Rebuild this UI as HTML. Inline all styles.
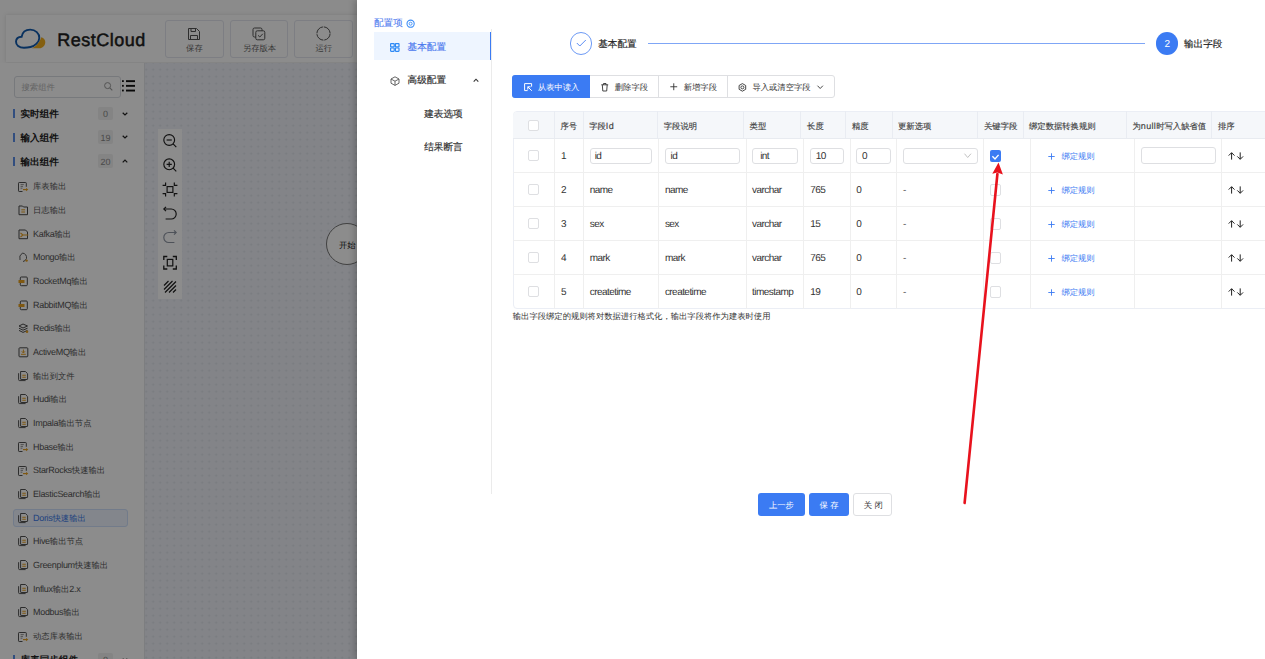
<!DOCTYPE html>
<html><head><meta charset="utf-8"><style>
html,body{margin:0;padding:0;width:1265px;height:659px;overflow:hidden;background:#fff}
body{position:relative;font-family:"Liberation Sans",sans-serif;text-rendering:geometricPrecision}
.a{position:absolute;line-height:1;white-space:nowrap;box-sizing:border-box}
svg.a{overflow:visible}
</style></head><body>

<div class="a" style="left:0.00px;top:0.00px;width:1265.00px;height:659.00px;background:#fdfdfd"></div>
<div class="a" style="left:6.30px;top:14.80px;width:1258.70px;height:47.70px;background:#fff;box-shadow:0 0 4px rgba(0,0,0,0.13)"></div>
<svg class="a" style="left:0;top:0" width="60" height="60"><path d="M31.3 48.3 C35 47.5 39.5 43 41.3 37.2 C44 38 45.4 40 45.3 42.3 C45.1 45.8 42.5 48.3 39.5 48.3 Z" fill="#f0ad1e"/><path d="M24 47.8 C19 47.8 15.9 45 16 41.5 C16.2 38.5 18.5 36.9 21.6 36.8 C22.5 31.6 26 29.6 30.2 29.6 C35.5 29.6 39.5 33.5 39.3 38 C39.2 42 35 46 30.5 47 C28 47.6 26 47.8 24 47.8 Z" fill="none" stroke="#1059ad" stroke-width="1.9"/></svg>
<div class="a" style="left:57.3px;top:30.9px;font-family:Liberation Sans;font-size:18px;letter-spacing:0.5px;color:#1e1e1e;-webkit-text-stroke:0.5px #1e1e1e">RestCloud</div>
<div class="a" style="left:164.70px;top:20.00px;width:59.30px;height:38.30px;background:#fff;border:1px solid #e3e6ee;border-radius:3px"></div>
<div class="a" style="left:186.10px;top:43.84px;font-size:8.32px;color:#666;font-weight:normal;"><span style="font-size:8.32px">保存</span></div>
<svg class="a" style="left:187.35px;top:26.50px;" width="14" height="14" viewBox="0 0 14 14"><path d="M1.5 1.5 H9.5 L12.5 4.5 V12.5 H1.5 Z" fill="none" stroke="#555" stroke-width="1"/><path d="M4 1.5 V4.5 H8.5 V1.5" fill="none" stroke="#555" stroke-width="1"/><path d="M3.5 12.5 V8.5 H10.5 V12.5" fill="none" stroke="#555" stroke-width="1"/></svg>
<div class="a" style="left:230.40px;top:20.00px;width:58.00px;height:38.30px;background:#fff;border:1px solid #e3e6ee;border-radius:3px"></div>
<div class="a" style="left:242.90px;top:43.84px;font-size:8.32px;color:#666;font-weight:normal;"><span style="font-size:8.32px">另存版本</span></div>
<svg class="a" style="left:252.40px;top:26.50px;" width="14" height="14" viewBox="0 0 14 14"><rect x="1" y="1" width="9" height="9" rx="1.5" fill="none" stroke="#555" stroke-width="1"/><rect x="3.8" y="3.8" width="9" height="9" rx="1.5" fill="#fff" stroke="#555" stroke-width="1"/><path d="M6 8.3 L7.8 10 L10.8 6.8" fill="none" stroke="#555" stroke-width="1"/></svg>
<div class="a" style="left:294.40px;top:20.00px;width:58.80px;height:38.30px;background:#fff;border:1px solid #e3e6ee;border-radius:3px"></div>
<div class="a" style="left:315.55px;top:43.84px;font-size:8.32px;color:#666;font-weight:normal;"><span style="font-size:8.32px">运行</span></div>
<svg class="a" style="left:316.30px;top:26.20px;" width="15" height="15" viewBox="0 0 15 15"><circle cx="7.5" cy="7.5" r="6.6" fill="none" stroke="#555" stroke-width="1" stroke-dasharray="9.5 0.9"/></svg>
<div class="a" style="left:0.00px;top:62.80px;width:144.50px;height:596.20px;background:#fff;border-right:1px solid #e4e6ea"></div>
<div class="a" style="left:13.50px;top:75.50px;width:107.00px;height:22.00px;background:#fff;border:1px solid #d9dce2;border-radius:3px"></div>
<div class="a" style="left:21.50px;top:82.94px;font-size:8.32px;color:#b5b5b5;font-weight:normal;"><span style="font-size:8.32px">搜索组件</span></div>
<svg class="a" style="left:103.50px;top:82.00px;" width="9" height="9" viewBox="0 0 9 9"><circle cx="3.6" cy="3.6" r="3" fill="none" stroke="#999" stroke-width="1"/><path d="M5.8 5.8 L8.3 8.3" stroke="#999" stroke-width="1.1"/></svg>
<svg class="a" style="left:122.00px;top:80.00px;" width="13" height="12" viewBox="0 0 13 12"><rect x="0" y="0.2" width="1.8" height="1.8" fill="#111"/><rect x="0" y="4.9" width="1.8" height="1.8" fill="#111"/><rect x="0" y="9.6" width="1.8" height="1.8" fill="#111"/><rect x="4" y="0.2" width="9" height="1.9" fill="#111"/><rect x="4" y="4.9" width="9" height="1.9" fill="#111"/><rect x="4" y="9.6" width="9" height="1.9" fill="#111"/></svg>
<div class="a" style="left:13.00px;top:109.20px;width:2.00px;height:9.00px;background:#5c8ee8"></div>
<div class="a" style="left:20.50px;top:110.36px;font-size:9.6px;color:#222;font-weight:bold;"><span style="font-size:9.6px">实时组件</span></div>
<div class="a" style="left:97.80px;top:106.70px;width:15.10px;height:13.40px;background:#f1f1f1;border-radius:2px"></div>
<div class="a" style="left:102.95px;top:110.14px;font-size:8.32px;color:#888;font-weight:normal;"><span style="font-size:9px;letter-spacing:0px">0</span></div>
<svg class="a" style="left:122.00px;top:111.70px;" width="6" height="4" viewBox="0 0 6 4"><path d="M0.7 0.8 L3 3 L5.3 0.8" fill="none" stroke="#222" stroke-width="1.2"/></svg>
<div class="a" style="left:13.00px;top:132.90px;width:2.00px;height:9.00px;background:#5c8ee8"></div>
<div class="a" style="left:20.50px;top:134.06px;font-size:9.6px;color:#222;font-weight:bold;"><span style="font-size:9.6px">输入组件</span></div>
<div class="a" style="left:97.80px;top:130.40px;width:15.10px;height:13.40px;background:#f1f1f1;border-radius:2px"></div>
<div class="a" style="left:100.55px;top:133.84px;font-size:8.32px;color:#888;font-weight:normal;"><span style="font-size:9px;letter-spacing:0px">19</span></div>
<svg class="a" style="left:122.00px;top:135.40px;" width="6" height="4" viewBox="0 0 6 4"><path d="M0.7 0.8 L3 3 L5.3 0.8" fill="none" stroke="#222" stroke-width="1.2"/></svg>
<div class="a" style="left:13.00px;top:156.70px;width:2.00px;height:9.00px;background:#5c8ee8"></div>
<div class="a" style="left:20.50px;top:157.86px;font-size:9.6px;color:#222;font-weight:bold;"><span style="font-size:9.6px">输出组件</span></div>
<div class="a" style="left:97.80px;top:154.20px;width:15.10px;height:13.40px;background:#f1f1f1;border-radius:2px"></div>
<div class="a" style="left:100.55px;top:157.64px;font-size:8.32px;color:#888;font-weight:normal;"><span style="font-size:9px;letter-spacing:0px">20</span></div>
<svg class="a" style="left:122.00px;top:158.70px;" width="6" height="4" viewBox="0 0 6 4"><path d="M0.7 3.3 L3 1 L5.3 3.3" fill="none" stroke="#222" stroke-width="1.2"/></svg>
<div class="a" style="left:33.00px;top:182.24px;font-size:8.32px;color:#555;font-weight:normal;"><span style="font-size:8.32px">库表输出</span></div>
<svg class="a" style="left:18.00px;top:181.80px;" width="11" height="11" viewBox="0 0 11 11"><path d="M8.3 4.8 V1.2 Q8.3 0.5 7.6 0.5 H1.2 Q0.5 0.5 0.5 1.2 V8.8 Q0.5 9.5 1.2 9.5 H4.5" fill="none" stroke="#4a4a4a" stroke-width="0.95"/><path d="M2.6 2.6 H5.8 M2.6 4.4 H5 M2.6 6.2 H4.4" stroke="#777" stroke-width="0.8"/><path d="M5 7.6 H9.2" stroke="#e8a020" stroke-width="1.2"/><path d="M8 5.9 L10.3 7.6 L8 9.3 Z" fill="#e8a020"/></svg>
<div class="a" style="left:33.00px;top:205.92px;font-size:8.32px;color:#555;font-weight:normal;"><span style="font-size:8.32px">日志输出</span></div>
<svg class="a" style="left:18.00px;top:205.08px;" width="11" height="11" viewBox="0 0 11 11"><path d="M1 1 H4.5 L5.5 2 H9.5 V9.7 H1 Z" fill="none" stroke="#4a4a4a" stroke-width="1"/><path d="M3.3 4.8 H7 M3.3 7 H7" stroke="#e8a020" stroke-width="1"/></svg>
<div class="a" style="left:33.00px;top:229.60px;font-size:8.32px;color:#555;font-weight:normal;"><span style="font-size:9px;letter-spacing:-0.3px">Kafka</span><span style="font-size:8.32px">输出</span></div>
<svg class="a" style="left:18.00px;top:228.76px;" width="11" height="11" viewBox="0 0 11 11"><path d="M1 1 H7.5 L9.5 3 V9.7 H1 Z" fill="none" stroke="#4a4a4a" stroke-width="1"/><path d="M2.5 4 L5 6 L2.5 8 M5 6 H10.3" fill="none" stroke="#e8a020" stroke-width="1.1"/></svg>
<div class="a" style="left:33.00px;top:253.28px;font-size:8.32px;color:#555;font-weight:normal;"><span style="font-size:9px;letter-spacing:-0.3px">Mongo</span><span style="font-size:8.32px">输出</span></div>
<svg class="a" style="left:18.00px;top:252.44px;" width="11" height="11" viewBox="0 0 11 11"><path d="M2 8 Q0.5 3.5 4.5 1 Q9 2 8.5 6.5 Q7 9.5 5 9.5" fill="none" stroke="#4a4a4a" stroke-width="0.9"/><circle cx="8.6" cy="8.6" r="1.2" fill="#e8a020"/></svg>
<div class="a" style="left:33.00px;top:276.96px;font-size:8.32px;color:#555;font-weight:normal;"><span style="font-size:9px;letter-spacing:-0.3px">RocketMq</span><span style="font-size:8.32px">输出</span></div>
<svg class="a" style="left:18.00px;top:276.12px;" width="11" height="11" viewBox="0 0 11 11"><rect x="2.3" y="1" width="7" height="8.7" rx="1" fill="none" stroke="#4a4a4a" stroke-width="1"/><rect x="0.5" y="4" width="6" height="3" fill="#e8a020"/></svg>
<div class="a" style="left:33.00px;top:300.64px;font-size:8.32px;color:#555;font-weight:normal;"><span style="font-size:9px;letter-spacing:-0.3px">RabbitMQ</span><span style="font-size:8.32px">输出</span></div>
<svg class="a" style="left:18.00px;top:299.80px;" width="11" height="11" viewBox="0 0 11 11"><rect x="2.3" y="1" width="7" height="8.7" rx="1" fill="none" stroke="#4a4a4a" stroke-width="1"/><rect x="0.5" y="4" width="6" height="3" fill="#e8a020"/></svg>
<div class="a" style="left:33.00px;top:324.32px;font-size:8.32px;color:#555;font-weight:normal;"><span style="font-size:9px;letter-spacing:-0.3px">Redis</span><span style="font-size:8.32px">输出</span></div>
<svg class="a" style="left:18.00px;top:323.48px;" width="11" height="11" viewBox="0 0 11 11"><path d="M1 3 L5 1 L9.5 3 L5 5 Z M1 5.2 L5 7.2 L9.5 5.2 M1 7.4 L5 9.4 L9.5 7.4" fill="none" stroke="#4a4a4a" stroke-width="1"/><circle cx="9" cy="8.8" r="1.3" fill="#e8a020"/></svg>
<div class="a" style="left:33.00px;top:348.00px;font-size:8.32px;color:#555;font-weight:normal;"><span style="font-size:9px;letter-spacing:-0.3px">ActiveMQ</span><span style="font-size:8.32px">输出</span></div>
<svg class="a" style="left:18.00px;top:347.16px;" width="11" height="11" viewBox="0 0 11 11"><rect x="1" y="0.8" width="8.8" height="9" rx="0.8" fill="none" stroke="#4a4a4a" stroke-width="1"/><path d="M3 7.3 H7.8 M5.4 2.5 V5.8 M3.8 4.3 L5.4 6 L7 4.3" fill="none" stroke="#e8a020" stroke-width="1"/></svg>
<div class="a" style="left:33.00px;top:371.68px;font-size:8.32px;color:#555;font-weight:normal;"><span style="font-size:8.32px">输出到文件</span></div>
<svg class="a" style="left:18.00px;top:370.64px;" width="11" height="11" viewBox="0 0 11 11"><path d="M0.6 2.2 V8.6 Q0.6 9.6 1.6 9.6 H7.6" fill="none" stroke="#4a4a4a" stroke-width="0.95"/><path d="M2.6 0.5 H7.4 L9.6 2.7 V8 Q9.6 8.5 9.1 8.5 H3.1 Q2.6 8.5 2.6 8 Z" fill="#fff" stroke="#4a4a4a" stroke-width="0.95"/><path d="M4.3 4.2 H7.8 M4.3 6.3 H7.8" stroke="#e8a020" stroke-width="1.1"/></svg>
<div class="a" style="left:33.00px;top:395.36px;font-size:8.32px;color:#555;font-weight:normal;"><span style="font-size:9px;letter-spacing:-0.3px">Hudi</span><span style="font-size:8.32px">输出</span></div>
<svg class="a" style="left:18.00px;top:394.32px;" width="11" height="11" viewBox="0 0 11 11"><path d="M0.6 2.2 V8.6 Q0.6 9.6 1.6 9.6 H7.6" fill="none" stroke="#4a4a4a" stroke-width="0.95"/><path d="M2.6 0.5 H7.4 L9.6 2.7 V8 Q9.6 8.5 9.1 8.5 H3.1 Q2.6 8.5 2.6 8 Z" fill="#fff" stroke="#4a4a4a" stroke-width="0.95"/><path d="M4.3 4.2 H7.8 M4.3 6.3 H7.8" stroke="#e8a020" stroke-width="1.1"/></svg>
<div class="a" style="left:33.00px;top:419.04px;font-size:8.32px;color:#555;font-weight:normal;"><span style="font-size:9px;letter-spacing:-0.3px">Impala</span><span style="font-size:8.32px">输出节点</span></div>
<svg class="a" style="left:18.00px;top:418.00px;" width="11" height="11" viewBox="0 0 11 11"><path d="M0.6 2.2 V8.6 Q0.6 9.6 1.6 9.6 H7.6" fill="none" stroke="#4a4a4a" stroke-width="0.95"/><path d="M2.6 0.5 H7.4 L9.6 2.7 V8 Q9.6 8.5 9.1 8.5 H3.1 Q2.6 8.5 2.6 8 Z" fill="#fff" stroke="#4a4a4a" stroke-width="0.95"/><path d="M4.3 4.2 H7.8 M4.3 6.3 H7.8" stroke="#e8a020" stroke-width="1.1"/></svg>
<div class="a" style="left:33.00px;top:442.72px;font-size:8.32px;color:#555;font-weight:normal;"><span style="font-size:9px;letter-spacing:-0.3px">Hbase</span><span style="font-size:8.32px">输出</span></div>
<svg class="a" style="left:18.00px;top:442.28px;" width="11" height="11" viewBox="0 0 11 11"><path d="M8.3 4.8 V1.2 Q8.3 0.5 7.6 0.5 H1.2 Q0.5 0.5 0.5 1.2 V8.8 Q0.5 9.5 1.2 9.5 H4.5" fill="none" stroke="#4a4a4a" stroke-width="0.95"/><path d="M2.6 2.6 H5.8 M2.6 4.4 H5 M2.6 6.2 H4.4" stroke="#777" stroke-width="0.8"/><path d="M5 7.6 H9.2" stroke="#e8a020" stroke-width="1.2"/><path d="M8 5.9 L10.3 7.6 L8 9.3 Z" fill="#e8a020"/></svg>
<div class="a" style="left:33.00px;top:466.40px;font-size:8.32px;color:#555;font-weight:normal;"><span style="font-size:9px;letter-spacing:-0.3px">StarRocks</span><span style="font-size:8.32px">快速输出</span></div>
<svg class="a" style="left:18.00px;top:465.96px;" width="11" height="11" viewBox="0 0 11 11"><path d="M8.3 4.8 V1.2 Q8.3 0.5 7.6 0.5 H1.2 Q0.5 0.5 0.5 1.2 V8.8 Q0.5 9.5 1.2 9.5 H4.5" fill="none" stroke="#4a4a4a" stroke-width="0.95"/><path d="M2.6 2.6 H5.8 M2.6 4.4 H5 M2.6 6.2 H4.4" stroke="#777" stroke-width="0.8"/><path d="M5 7.6 H9.2" stroke="#e8a020" stroke-width="1.2"/><path d="M8 5.9 L10.3 7.6 L8 9.3 Z" fill="#e8a020"/></svg>
<div class="a" style="left:33.00px;top:490.08px;font-size:8.32px;color:#555;font-weight:normal;"><span style="font-size:9px;letter-spacing:-0.3px">ElasticSearch</span><span style="font-size:8.32px">输出</span></div>
<svg class="a" style="left:18.00px;top:489.04px;" width="11" height="11" viewBox="0 0 11 11"><path d="M0.6 2.2 V8.6 Q0.6 9.6 1.6 9.6 H7.6" fill="none" stroke="#4a4a4a" stroke-width="0.95"/><path d="M2.6 0.5 H7.4 L9.6 2.7 V8 Q9.6 8.5 9.1 8.5 H3.1 Q2.6 8.5 2.6 8 Z" fill="#fff" stroke="#4a4a4a" stroke-width="0.95"/><path d="M4.3 4.2 H7.8 M4.3 6.3 H7.8" stroke="#e8a020" stroke-width="1.1"/></svg>
<div class="a" style="left:13.40px;top:508.92px;width:114.30px;height:18.10px;background:#eef4ff;border:1px solid #cfe0fb;border-radius:3px"></div>
<div class="a" style="left:33.00px;top:513.76px;font-size:8.32px;color:#3d7ae8;font-weight:normal;"><span style="font-size:9px;letter-spacing:-0.3px">Doris</span><span style="font-size:8.32px">快速输出</span></div>
<svg class="a" style="left:18.00px;top:512.72px;" width="11" height="11" viewBox="0 0 11 11"><path d="M0.6 2.2 V8.6 Q0.6 9.6 1.6 9.6 H7.6" fill="none" stroke="#4a4a4a" stroke-width="0.95"/><path d="M2.6 0.5 H7.4 L9.6 2.7 V8 Q9.6 8.5 9.1 8.5 H3.1 Q2.6 8.5 2.6 8 Z" fill="#fff" stroke="#4a4a4a" stroke-width="0.95"/><path d="M4.3 4.2 H7.8 M4.3 6.3 H7.8" stroke="#e8a020" stroke-width="1.1"/></svg>
<div class="a" style="left:33.00px;top:537.44px;font-size:8.32px;color:#555;font-weight:normal;"><span style="font-size:9px;letter-spacing:-0.3px">Hive</span><span style="font-size:8.32px">输出节点</span></div>
<svg class="a" style="left:18.00px;top:536.40px;" width="11" height="11" viewBox="0 0 11 11"><path d="M0.6 2.2 V8.6 Q0.6 9.6 1.6 9.6 H7.6" fill="none" stroke="#4a4a4a" stroke-width="0.95"/><path d="M2.6 0.5 H7.4 L9.6 2.7 V8 Q9.6 8.5 9.1 8.5 H3.1 Q2.6 8.5 2.6 8 Z" fill="#fff" stroke="#4a4a4a" stroke-width="0.95"/><path d="M4.3 4.2 H7.8 M4.3 6.3 H7.8" stroke="#e8a020" stroke-width="1.1"/></svg>
<div class="a" style="left:33.00px;top:561.12px;font-size:8.32px;color:#555;font-weight:normal;"><span style="font-size:9px;letter-spacing:-0.3px">Greenplum</span><span style="font-size:8.32px">快速输出</span></div>
<svg class="a" style="left:18.00px;top:560.08px;" width="11" height="11" viewBox="0 0 11 11"><path d="M0.6 2.2 V8.6 Q0.6 9.6 1.6 9.6 H7.6" fill="none" stroke="#4a4a4a" stroke-width="0.95"/><path d="M2.6 0.5 H7.4 L9.6 2.7 V8 Q9.6 8.5 9.1 8.5 H3.1 Q2.6 8.5 2.6 8 Z" fill="#fff" stroke="#4a4a4a" stroke-width="0.95"/><path d="M4.3 4.2 H7.8 M4.3 6.3 H7.8" stroke="#e8a020" stroke-width="1.1"/></svg>
<div class="a" style="left:33.00px;top:584.80px;font-size:8.32px;color:#555;font-weight:normal;"><span style="font-size:9px;letter-spacing:-0.3px">Influx</span><span style="font-size:8.32px">输出</span><span style="font-size:9px;letter-spacing:-0.3px">2.x</span></div>
<svg class="a" style="left:18.00px;top:583.76px;" width="11" height="11" viewBox="0 0 11 11"><path d="M0.6 2.2 V8.6 Q0.6 9.6 1.6 9.6 H7.6" fill="none" stroke="#4a4a4a" stroke-width="0.95"/><path d="M2.6 0.5 H7.4 L9.6 2.7 V8 Q9.6 8.5 9.1 8.5 H3.1 Q2.6 8.5 2.6 8 Z" fill="#fff" stroke="#4a4a4a" stroke-width="0.95"/><path d="M4.3 4.2 H7.8 M4.3 6.3 H7.8" stroke="#e8a020" stroke-width="1.1"/></svg>
<div class="a" style="left:33.00px;top:608.48px;font-size:8.32px;color:#555;font-weight:normal;"><span style="font-size:9px;letter-spacing:-0.3px">Modbus</span><span style="font-size:8.32px">输出</span></div>
<svg class="a" style="left:18.00px;top:607.44px;" width="11" height="11" viewBox="0 0 11 11"><path d="M0.6 2.2 V8.6 Q0.6 9.6 1.6 9.6 H7.6" fill="none" stroke="#4a4a4a" stroke-width="0.95"/><path d="M2.6 0.5 H7.4 L9.6 2.7 V8 Q9.6 8.5 9.1 8.5 H3.1 Q2.6 8.5 2.6 8 Z" fill="#fff" stroke="#4a4a4a" stroke-width="0.95"/><path d="M4.3 4.2 H7.8 M4.3 6.3 H7.8" stroke="#e8a020" stroke-width="1.1"/></svg>
<div class="a" style="left:33.00px;top:632.16px;font-size:8.32px;color:#555;font-weight:normal;"><span style="font-size:8.32px">动态库表输出</span></div>
<svg class="a" style="left:18.00px;top:631.72px;" width="11" height="11" viewBox="0 0 11 11"><path d="M8.3 4.8 V1.2 Q8.3 0.5 7.6 0.5 H1.2 Q0.5 0.5 0.5 1.2 V8.8 Q0.5 9.5 1.2 9.5 H4.5" fill="none" stroke="#4a4a4a" stroke-width="0.95"/><path d="M2.6 2.6 H5.8 M2.6 4.4 H5 M2.6 6.2 H4.4" stroke="#777" stroke-width="0.8"/><path d="M5 7.6 H9.2" stroke="#e8a020" stroke-width="1.2"/><path d="M8 5.9 L10.3 7.6 L8 9.3 Z" fill="#e8a020"/></svg>
<div class="a" style="left:13.00px;top:655.00px;width:2.00px;height:9.00px;background:#5c8ee8"></div>
<div class="a" style="left:20.50px;top:656.16px;font-size:9.6px;color:#222;font-weight:bold;"><span style="font-size:9.6px">库表同步组件</span></div>
<div class="a" style="left:97.80px;top:652.50px;width:15.10px;height:13.40px;background:#f1f1f1;border-radius:2px"></div>
<div class="a" style="left:102.95px;top:655.94px;font-size:8.32px;color:#888;font-weight:normal;"><span style="font-size:9px;letter-spacing:0px">0</span></div>
<svg class="a" style="left:122.00px;top:657.50px;" width="6" height="4" viewBox="0 0 6 4"><path d="M0.7 0.8 L3 3 L5.3 0.8" fill="none" stroke="#222" stroke-width="1.2"/></svg>
<div class="a" style="left:144.5px;top:62.8px;width:1121px;height:597px;background-color:#eef1f8;background-image:radial-gradient(circle, #dde0e7 0.8px, transparent 1.2px);background-size:7px 7px;background-position:4.7px 3.2px"></div>
<div class="a" style="left:157.50px;top:129.00px;width:24.30px;height:170.30px;background:#fff"></div>
<svg class="a" style="left:0;top:0" width="400" height="400"><g fill="none" stroke="#1f1f1f" stroke-width="1.15"><circle cx="169.2" cy="140" r="5.4"/><path d="M173.1 143.9 L176.3 147.1"/><path d="M166.6 140 H171.8"/><circle cx="169.2" cy="164.3" r="5.4"/><path d="M173.1 168.2 L176.3 171.4"/><path d="M166.6 164.3 H171.8 M169.2 161.7 V166.9"/><rect x="167.1" y="186.6" width="5.8" height="5.8"/><path d="M162.6 185.4 H165.6 V182.6 M177.4 185.4 H174.3 V182.6 M162.6 193.6 H165.6 V196.6 M177.4 193.6 H174.3 V196.6"/><path d="M164 209 H171.2 A5 5 0 0 1 171.2 219 H165.6"/><path d="M166 206.8 L163.8 209 L166 211.2"/></g><g fill="none" stroke="#8e95a3" stroke-width="1.15"><path d="M176 232.5 H168.8 A5 5 0 0 0 168.8 242.5 H174.4"/><path d="M174 230.3 L176.2 232.5 L174 234.7"/></g><g fill="none" stroke="#1f1f1f" stroke-width="1.3"><path d="M163.8 260 V256.5 H167.3 M172.8 256.5 H176.3 V260 M176.3 265.5 V269 H172.8 M167.3 269 H163.8 V265.5"/><rect x="167.3" y="259.4" width="5.5" height="6.5" stroke-width="1.2"/></g><g stroke="#1f1f1f" stroke-width="1.2"><path d="M164 285.5 L168.5 281 M164 289.5 L172.5 281 M165 292.5 L176 281.5 M169 292.5 L176 285.5 M173 292.5 L176 289.5"/></g></svg>
<div class="a" style="left:325.8px;top:223px;width:42px;height:42px;border-radius:50%;border:1px solid #777;background:#fff"></div>
<div class="a" style="left:339.00px;top:240.64px;font-size:8.32px;color:#111;font-weight:normal;"><span style="font-size:8.32px">开始</span></div>
<div class="a" style="left:0.00px;top:0.00px;width:1265.00px;height:659.00px;background:rgba(0,0,0,0.45)"></div>
<div class="a" style="left:357.00px;top:0.00px;width:908.00px;height:659.00px;background:#fff;box-shadow:-3px 0 6px rgba(0,0,0,0.18)"></div>
<div class="a" style="left:374.00px;top:18.96px;font-size:9.6px;color:#5580f0;font-weight:normal;-webkit-text-stroke:0.1px #5580f0"><span style="font-size:9.6px">配置项</span></div>
<svg class="a" style="left:405.50px;top:19.20px;" width="9.5" height="9.5" viewBox="0 0 9.5 9.5"><circle cx="4.6" cy="4.7" r="3.6" fill="none" stroke="#3d8ef7" stroke-width="1.1"/><circle cx="4.6" cy="4.7" r="1.5" fill="none" stroke="#3d8ef7" stroke-width="0.9"/></svg>
<div class="a" style="left:374.00px;top:32.00px;width:116.00px;height:28.20px;background:#eef5ff"></div>
<div class="a" style="left:489.80px;top:32.00px;width:2.10px;height:28.20px;background:#3b7bf3"></div>
<div class="a" style="left:491.00px;top:29.00px;width:1.00px;height:465.00px;background:#ebebeb"></div>
<svg class="a" style="left:389.80px;top:42.60px;" width="10" height="9" viewBox="0 0 10 9"><rect x="0.6" y="0.6" width="3.6" height="3.3" rx="0.5" fill="none" stroke="#2f8af5" stroke-width="1.2"/><rect x="5.4" y="0.6" width="3.6" height="3.3" rx="0.5" fill="none" stroke="#2f8af5" stroke-width="1.2"/><rect x="0.6" y="5" width="3.6" height="3.3" rx="0.5" fill="none" stroke="#2f8af5" stroke-width="1.2"/><rect x="5.4" y="5" width="3.6" height="3.3" rx="0.5" fill="none" stroke="#2f8af5" stroke-width="1.2"/></svg>
<div class="a" style="left:407.60px;top:42.76px;font-size:9.6px;color:#4a78ee;font-weight:normal;-webkit-text-stroke:0.15px #4a78ee"><span style="font-size:9.6px">基本配置</span></div>
<svg class="a" style="left:389.80px;top:75.50px;" width="10" height="10" viewBox="0 0 10 10"><path d="M5 0.8 L9 3 V7.2 L5 9.4 L1 7.2 V3 Z M1 3 L5 5.2 L9 3 M5 5.2 V9.4" fill="none" stroke="#555" stroke-width="0.9" stroke-linejoin="round"/></svg>
<div class="a" style="left:407.60px;top:76.06px;font-size:9.6px;color:#333;font-weight:normal;-webkit-text-stroke:0.2px #333"><span style="font-size:9.6px">高级配置</span></div>
<svg class="a" style="left:472.80px;top:77.60px;" width="6" height="4.5" viewBox="0 0 6 4.5"><path d="M0.7 3.6 L3 1.2 L5.3 3.6" fill="none" stroke="#333" stroke-width="1.1"/></svg>
<div class="a" style="left:424.20px;top:109.56px;font-size:9.6px;color:#333;font-weight:normal;-webkit-text-stroke:0.2px #333"><span style="font-size:9.6px">建表选项</span></div>
<div class="a" style="left:424.20px;top:142.66px;font-size:9.6px;color:#333;font-weight:normal;-webkit-text-stroke:0.2px #333"><span style="font-size:9.6px">结果断言</span></div>
<div class="a" style="left:570px;top:32.3px;width:22.3px;height:22.3px;border-radius:50%;border:1px solid #6d9af5"></div>
<svg class="a" style="left:575.50px;top:38.50px;" width="11" height="9" viewBox="0 0 11 9"><path d="M0.8 4 L3.8 7 L9.8 1" fill="none" stroke="#5a8cf4" stroke-width="1"/></svg>
<div class="a" style="left:598.20px;top:39.96px;font-size:9.6px;color:#222;font-weight:normal;-webkit-text-stroke:0.15px #222"><span style="font-size:9.6px">基本配置</span></div>
<div class="a" style="left:648.00px;top:43.00px;width:497.00px;height:1.00px;background:#7fa6f6"></div>
<div class="a" style="left:1156px;top:32.3px;width:22.3px;height:22.3px;border-radius:50%;background:#3b7bf3"></div>
<div class="a" style="left:1164.60px;top:39.94px;font-size:8.32px;color:#fff;font-weight:normal;"><span style="font-size:10px;letter-spacing:0px">2</span></div>
<div class="a" style="left:1184.00px;top:40.06px;font-size:9.6px;color:#222;font-weight:normal;-webkit-text-stroke:0.15px #222"><span style="font-size:9.6px">输出字段</span></div>
<div class="a" style="left:512.20px;top:75.20px;width:323.20px;height:22.80px;border:1px solid #dedfe2;border-radius:3px;background:#fff"></div>
<div class="a" style="left:512.20px;top:75.20px;width:77.50px;height:22.80px;background:#3b7bf3;border-radius:3px 0 0 3px"></div>
<div class="a" style="left:658.00px;top:75.20px;width:1.00px;height:22.80px;background:#dedfe2"></div>
<div class="a" style="left:727.30px;top:75.20px;width:1.00px;height:22.80px;background:#dedfe2"></div>
<svg class="a" style="left:523.60px;top:83.20px;" width="8.5" height="8.5" viewBox="0 0 8.5 8.5"><path d="M7.6 3.6 V0.6 H0.6 V7.6 H3.6" fill="none" stroke="#fff" stroke-width="1"/><path d="M3.8 3.8 L7.8 7.8 M3.8 3.8 H6.6 M3.8 3.8 V6.6" fill="none" stroke="#fff" stroke-width="1"/></svg>
<div class="a" style="left:537.70px;top:82.64px;font-size:8.32px;color:#fff;font-weight:normal;"><span style="font-size:8.32px">从表中读入</span></div>
<svg class="a" style="left:601.30px;top:83.00px;" width="7.5" height="8.5" viewBox="0 0 7.5 8.5"><path d="M0.3 1.8 H7.2 M2.5 1.8 V0.5 H5 V1.8 M1.3 1.8 L1.8 8 H5.7 L6.2 1.8" fill="none" stroke="#333" stroke-width="0.9"/></svg>
<div class="a" style="left:614.80px;top:82.64px;font-size:8.32px;color:#333;font-weight:normal;"><span style="font-size:8.32px">删除字段</span></div>
<svg class="a" style="left:669.80px;top:83.30px;" width="7.5" height="7.5" viewBox="0 0 7.5 7.5"><path d="M3.75 0.3 V7.2 M0.3 3.75 H7.2" stroke="#333" stroke-width="0.9"/></svg>
<div class="a" style="left:683.70px;top:82.64px;font-size:8.32px;color:#333;font-weight:normal;"><span style="font-size:8.32px">新增字段</span></div>
<svg class="a" style="left:737.80px;top:82.80px;" width="8.8" height="8.8" viewBox="0 0 8.8 8.8"><path d="M4.4 0.6 L7.7 2.5 V6.3 L4.4 8.2 L1.1 6.3 V2.5 Z" fill="none" stroke="#333" stroke-width="0.9"/><circle cx="4.4" cy="4.4" r="1.5" fill="none" stroke="#333" stroke-width="0.9"/></svg>
<div class="a" style="left:752.40px;top:82.64px;font-size:8.32px;color:#333;font-weight:normal;"><span style="font-size:8.32px">导入或清空字段</span></div>
<svg class="a" style="left:817.40px;top:84.80px;" width="6.5" height="4.5" viewBox="0 0 6.5 4.5"><path d="M0.5 0.7 L3.2 3.5 L5.9 0.7" fill="none" stroke="#333" stroke-width="0.9"/></svg>
<div class="a" style="left:512.50px;top:111.20px;width:762.50px;height:198.00px;border:1px solid #ebeef5;border-radius:4px;background:#fff"></div>
<div class="a" style="left:513.00px;top:111.70px;width:762.00px;height:26.90px;background:#f5f7fa;border-radius:4px 0 0 0"></div>
<div class="a" style="left:554.10px;top:111.20px;width:1.00px;height:27.40px;background:#e9ecf2"></div>
<div class="a" style="left:583.10px;top:111.20px;width:1.00px;height:27.40px;background:#e9ecf2"></div>
<div class="a" style="left:657.00px;top:111.20px;width:1.00px;height:27.40px;background:#e9ecf2"></div>
<div class="a" style="left:743.00px;top:111.20px;width:1.00px;height:27.40px;background:#e9ecf2"></div>
<div class="a" style="left:800.30px;top:111.20px;width:1.00px;height:27.40px;background:#e9ecf2"></div>
<div class="a" style="left:845.40px;top:111.20px;width:1.00px;height:27.40px;background:#e9ecf2"></div>
<div class="a" style="left:891.70px;top:111.20px;width:1.00px;height:27.40px;background:#e9ecf2"></div>
<div class="a" style="left:976.80px;top:111.20px;width:1.00px;height:27.40px;background:#e9ecf2"></div>
<div class="a" style="left:1022.70px;top:111.20px;width:1.00px;height:27.40px;background:#e9ecf2"></div>
<div class="a" style="left:1125.80px;top:111.20px;width:1.00px;height:27.40px;background:#e9ecf2"></div>
<div class="a" style="left:1210.70px;top:111.20px;width:1.00px;height:27.40px;background:#e9ecf2"></div>
<div class="a" style="left:512.50px;top:138.10px;width:762.50px;height:1.00px;background:#e8ebf0"></div>
<div class="a" style="left:554.00px;top:138.60px;width:1.00px;height:170.40px;background:#efefef"></div>
<div class="a" style="left:582.90px;top:138.60px;width:1.00px;height:170.40px;background:#efefef"></div>
<div class="a" style="left:658.00px;top:138.60px;width:1.00px;height:170.40px;background:#efefef"></div>
<div class="a" style="left:746.00px;top:138.60px;width:1.00px;height:170.40px;background:#efefef"></div>
<div class="a" style="left:803.10px;top:138.60px;width:1.00px;height:170.40px;background:#efefef"></div>
<div class="a" style="left:850.10px;top:138.60px;width:1.00px;height:170.40px;background:#efefef"></div>
<div class="a" style="left:896.00px;top:138.60px;width:1.00px;height:170.40px;background:#efefef"></div>
<div class="a" style="left:982.80px;top:138.60px;width:1.00px;height:170.40px;background:#efefef"></div>
<div class="a" style="left:1029.70px;top:138.60px;width:1.00px;height:170.40px;background:#efefef"></div>
<div class="a" style="left:1133.90px;top:138.60px;width:1.00px;height:170.40px;background:#efefef"></div>
<div class="a" style="left:1220.80px;top:138.60px;width:1.00px;height:170.40px;background:#efefef"></div>
<div class="a" style="left:512.50px;top:172.10px;width:762.50px;height:1.00px;background:#efefef"></div>
<div class="a" style="left:512.50px;top:206.10px;width:762.50px;height:1.00px;background:#efefef"></div>
<div class="a" style="left:512.50px;top:240.10px;width:762.50px;height:1.00px;background:#efefef"></div>
<div class="a" style="left:512.50px;top:274.10px;width:762.50px;height:1.00px;background:#efefef"></div>
<div class="a" style="left:528.30px;top:120.00px;width:10.70px;height:11.30px;border:1px solid #dedfe2;border-radius:2px;background:#fff"></div>
<div class="a" style="left:560.40px;top:122.34px;font-size:8.32px;color:#3f3f3f;font-weight:normal;-webkit-text-stroke:0.15px #3f3f3f"><span style="font-size:8.32px">序号</span></div>
<div class="a" style="left:589.20px;top:122.34px;font-size:8.32px;color:#3f3f3f;font-weight:normal;-webkit-text-stroke:0.15px #3f3f3f"><span style="font-size:8.32px">字段</span><span style="font-size:9px;letter-spacing:0.35px">Id</span></div>
<div class="a" style="left:663.80px;top:122.34px;font-size:8.32px;color:#3f3f3f;font-weight:normal;-webkit-text-stroke:0.15px #3f3f3f"><span style="font-size:8.32px">字段说明</span></div>
<div class="a" style="left:749.60px;top:122.34px;font-size:8.32px;color:#3f3f3f;font-weight:normal;-webkit-text-stroke:0.15px #3f3f3f"><span style="font-size:8.32px">类型</span></div>
<div class="a" style="left:807.10px;top:122.34px;font-size:8.32px;color:#3f3f3f;font-weight:normal;-webkit-text-stroke:0.15px #3f3f3f"><span style="font-size:8.32px">长度</span></div>
<div class="a" style="left:852.00px;top:122.34px;font-size:8.32px;color:#3f3f3f;font-weight:normal;-webkit-text-stroke:0.15px #3f3f3f"><span style="font-size:8.32px">精度</span></div>
<div class="a" style="left:898.00px;top:122.34px;font-size:8.32px;color:#3f3f3f;font-weight:normal;-webkit-text-stroke:0.15px #3f3f3f"><span style="font-size:8.32px">更新选项</span></div>
<div class="a" style="left:984.00px;top:122.34px;font-size:8.32px;color:#3f3f3f;font-weight:normal;-webkit-text-stroke:0.15px #3f3f3f"><span style="font-size:8.32px">关键字段</span></div>
<div class="a" style="left:1029.00px;top:122.34px;font-size:8.32px;color:#3f3f3f;font-weight:normal;-webkit-text-stroke:0.15px #3f3f3f"><span style="font-size:8.32px">绑定数据转换规则</span></div>
<div class="a" style="left:1132.50px;top:122.34px;font-size:8.32px;color:#3f3f3f;font-weight:normal;-webkit-text-stroke:0.15px #3f3f3f"><span style="font-size:8.32px">为</span><span style="font-size:9px;letter-spacing:0.35px">null</span><span style="font-size:8.32px">时写入缺省值</span></div>
<div class="a" style="left:1218.00px;top:122.34px;font-size:8.32px;color:#3f3f3f;font-weight:normal;-webkit-text-stroke:0.15px #3f3f3f"><span style="font-size:8.32px">排序</span></div>
<div class="a" style="left:528.30px;top:150.00px;width:10.70px;height:11.40px;border:1px solid #dedfe2;border-radius:2px;background:#fff"></div>
<div class="a" style="left:560.90px;top:151.54px;font-size:8.32px;color:#333;font-weight:normal;"><span style="font-size:10px;letter-spacing:-0.55px">1</span></div>
<div class="a" style="left:589.70px;top:148.30px;width:62.70px;height:15.60px;border:1px solid #dedfe2;border-radius:3px;background:#fff"></div>
<div class="a" style="left:594.70px;top:151.54px;font-size:8.32px;color:#333;font-weight:normal;"><span style="font-size:10px;letter-spacing:-0.55px">id</span></div>
<div class="a" style="left:665.20px;top:148.30px;width:74.50px;height:15.60px;border:1px solid #dedfe2;border-radius:3px;background:#fff"></div>
<div class="a" style="left:670.50px;top:151.54px;font-size:8.32px;color:#333;font-weight:normal;"><span style="font-size:10px;letter-spacing:-0.55px">id</span></div>
<div class="a" style="left:752.40px;top:148.30px;width:45.30px;height:15.60px;border:1px solid #dedfe2;border-radius:3px;background:#fff"></div>
<div class="a" style="left:760.20px;top:151.54px;font-size:8.32px;color:#333;font-weight:normal;"><span style="font-size:10px;letter-spacing:-0.55px">int</span></div>
<div class="a" style="left:809.90px;top:148.30px;width:34.30px;height:15.60px;border:1px solid #dedfe2;border-radius:3px;background:#fff"></div>
<div class="a" style="left:815.80px;top:151.54px;font-size:8.32px;color:#333;font-weight:normal;"><span style="font-size:10px;letter-spacing:-0.55px">10</span></div>
<div class="a" style="left:856.10px;top:148.30px;width:34.60px;height:15.60px;border:1px solid #dedfe2;border-radius:3px;background:#fff"></div>
<div class="a" style="left:861.90px;top:151.54px;font-size:8.32px;color:#333;font-weight:normal;"><span style="font-size:10px;letter-spacing:-0.55px">0</span></div>
<div class="a" style="left:902.90px;top:148.30px;width:74.70px;height:15.60px;border:1px solid #dedfe2;border-radius:3px;background:#fff"></div>
<svg class="a" style="left:964.00px;top:152.60px;" width="7.5" height="5.5" viewBox="0 0 7.5 5.5"><path d="M0.5 0.7 L3.7 4.5 L7 0.7" fill="none" stroke="#bbb" stroke-width="0.9"/></svg>
<div class="a" style="left:989.60px;top:149.90px;width:11.20px;height:11.80px;background:#3b7bf3;border-radius:2px"></div>
<svg class="a" style="left:989.60px;top:149.90px;" width="11.2" height="11.8" viewBox="0 0 11.2 11.8"><path d="M2.4 6.3 L5 8.9 L8.6 4.9" fill="none" stroke="#fff" stroke-width="1.4"/></svg>
<div class="a" style="left:1140.50px;top:147.40px;width:75.10px;height:16.50px;border:1px solid #dedfe2;border-radius:3px;background:#fff"></div>
<svg class="a" style="left:1047.80px;top:152.50px;" width="7" height="7" viewBox="0 0 7 7"><path d="M3.5 0.3 V6.7 M0.3 3.5 H6.7" stroke="#3b7bf3" stroke-width="0.9"/></svg>
<div class="a" style="left:1061.40px;top:152.34px;font-size:8.32px;color:#3b7bf3;font-weight:normal;"><span style="font-size:8.32px">绑定规则</span></div>
<svg class="a" style="left:1227.80px;top:152.00px;" width="16" height="8" viewBox="0 0 16 8"><path d="M3.6 7.6 V0.8 M0.7 3.6 L3.6 0.7 L6.5 3.6" fill="none" stroke="#222" stroke-width="1"/><path d="M12.2 0.4 V7.2 M9.3 4.4 L12.2 7.3 L15.1 4.4" fill="none" stroke="#222" stroke-width="1"/></svg>
<div class="a" style="left:528.30px;top:184.00px;width:10.70px;height:11.40px;border:1px solid #dedfe2;border-radius:2px;background:#fff"></div>
<div class="a" style="left:560.90px;top:185.54px;font-size:8.32px;color:#333;font-weight:normal;"><span style="font-size:10px;letter-spacing:-0.55px">2</span></div>
<div class="a" style="left:589.70px;top:185.54px;font-size:8.32px;color:#333;font-weight:normal;"><span style="font-size:10px;letter-spacing:-0.55px">name</span></div>
<div class="a" style="left:664.90px;top:185.54px;font-size:8.32px;color:#333;font-weight:normal;"><span style="font-size:10px;letter-spacing:-0.55px">name</span></div>
<div class="a" style="left:752.10px;top:185.54px;font-size:8.32px;color:#333;font-weight:normal;"><span style="font-size:10px;letter-spacing:-0.55px">varchar</span></div>
<div class="a" style="left:810.20px;top:185.54px;font-size:8.32px;color:#333;font-weight:normal;"><span style="font-size:10px;letter-spacing:-0.55px">765</span></div>
<div class="a" style="left:856.20px;top:185.54px;font-size:8.32px;color:#333;font-weight:normal;"><span style="font-size:10px;letter-spacing:-0.55px">0</span></div>
<div class="a" style="left:902.90px;top:185.54px;font-size:8.32px;color:#555;font-weight:normal;"><span style="font-size:10px;letter-spacing:-0.55px">-</span></div>
<div class="a" style="left:989.60px;top:184.00px;width:11.20px;height:11.60px;border:1px solid #dedfe2;border-radius:2px;background:#fff"></div>
<svg class="a" style="left:1047.80px;top:186.50px;" width="7" height="7" viewBox="0 0 7 7"><path d="M3.5 0.3 V6.7 M0.3 3.5 H6.7" stroke="#3b7bf3" stroke-width="0.9"/></svg>
<div class="a" style="left:1061.40px;top:186.34px;font-size:8.32px;color:#3b7bf3;font-weight:normal;"><span style="font-size:8.32px">绑定规则</span></div>
<svg class="a" style="left:1227.80px;top:186.00px;" width="16" height="8" viewBox="0 0 16 8"><path d="M3.6 7.6 V0.8 M0.7 3.6 L3.6 0.7 L6.5 3.6" fill="none" stroke="#222" stroke-width="1"/><path d="M12.2 0.4 V7.2 M9.3 4.4 L12.2 7.3 L15.1 4.4" fill="none" stroke="#222" stroke-width="1"/></svg>
<div class="a" style="left:528.30px;top:218.00px;width:10.70px;height:11.40px;border:1px solid #dedfe2;border-radius:2px;background:#fff"></div>
<div class="a" style="left:560.90px;top:219.54px;font-size:8.32px;color:#333;font-weight:normal;"><span style="font-size:10px;letter-spacing:-0.55px">3</span></div>
<div class="a" style="left:589.70px;top:219.54px;font-size:8.32px;color:#333;font-weight:normal;"><span style="font-size:10px;letter-spacing:-0.55px">sex</span></div>
<div class="a" style="left:664.90px;top:219.54px;font-size:8.32px;color:#333;font-weight:normal;"><span style="font-size:10px;letter-spacing:-0.55px">sex</span></div>
<div class="a" style="left:752.10px;top:219.54px;font-size:8.32px;color:#333;font-weight:normal;"><span style="font-size:10px;letter-spacing:-0.55px">varchar</span></div>
<div class="a" style="left:810.20px;top:219.54px;font-size:8.32px;color:#333;font-weight:normal;"><span style="font-size:10px;letter-spacing:-0.55px">15</span></div>
<div class="a" style="left:856.20px;top:219.54px;font-size:8.32px;color:#333;font-weight:normal;"><span style="font-size:10px;letter-spacing:-0.55px">0</span></div>
<div class="a" style="left:902.90px;top:219.54px;font-size:8.32px;color:#555;font-weight:normal;"><span style="font-size:10px;letter-spacing:-0.55px">-</span></div>
<div class="a" style="left:989.60px;top:218.00px;width:11.20px;height:11.60px;border:1px solid #dedfe2;border-radius:2px;background:#fff"></div>
<svg class="a" style="left:1047.80px;top:220.50px;" width="7" height="7" viewBox="0 0 7 7"><path d="M3.5 0.3 V6.7 M0.3 3.5 H6.7" stroke="#3b7bf3" stroke-width="0.9"/></svg>
<div class="a" style="left:1061.40px;top:220.34px;font-size:8.32px;color:#3b7bf3;font-weight:normal;"><span style="font-size:8.32px">绑定规则</span></div>
<svg class="a" style="left:1227.80px;top:220.00px;" width="16" height="8" viewBox="0 0 16 8"><path d="M3.6 7.6 V0.8 M0.7 3.6 L3.6 0.7 L6.5 3.6" fill="none" stroke="#222" stroke-width="1"/><path d="M12.2 0.4 V7.2 M9.3 4.4 L12.2 7.3 L15.1 4.4" fill="none" stroke="#222" stroke-width="1"/></svg>
<div class="a" style="left:528.30px;top:252.00px;width:10.70px;height:11.40px;border:1px solid #dedfe2;border-radius:2px;background:#fff"></div>
<div class="a" style="left:560.90px;top:253.54px;font-size:8.32px;color:#333;font-weight:normal;"><span style="font-size:10px;letter-spacing:-0.55px">4</span></div>
<div class="a" style="left:589.70px;top:253.54px;font-size:8.32px;color:#333;font-weight:normal;"><span style="font-size:10px;letter-spacing:-0.55px">mark</span></div>
<div class="a" style="left:664.90px;top:253.54px;font-size:8.32px;color:#333;font-weight:normal;"><span style="font-size:10px;letter-spacing:-0.55px">mark</span></div>
<div class="a" style="left:752.10px;top:253.54px;font-size:8.32px;color:#333;font-weight:normal;"><span style="font-size:10px;letter-spacing:-0.55px">varchar</span></div>
<div class="a" style="left:810.20px;top:253.54px;font-size:8.32px;color:#333;font-weight:normal;"><span style="font-size:10px;letter-spacing:-0.55px">765</span></div>
<div class="a" style="left:856.20px;top:253.54px;font-size:8.32px;color:#333;font-weight:normal;"><span style="font-size:10px;letter-spacing:-0.55px">0</span></div>
<div class="a" style="left:902.90px;top:253.54px;font-size:8.32px;color:#555;font-weight:normal;"><span style="font-size:10px;letter-spacing:-0.55px">-</span></div>
<div class="a" style="left:989.60px;top:252.00px;width:11.20px;height:11.60px;border:1px solid #dedfe2;border-radius:2px;background:#fff"></div>
<svg class="a" style="left:1047.80px;top:254.50px;" width="7" height="7" viewBox="0 0 7 7"><path d="M3.5 0.3 V6.7 M0.3 3.5 H6.7" stroke="#3b7bf3" stroke-width="0.9"/></svg>
<div class="a" style="left:1061.40px;top:254.34px;font-size:8.32px;color:#3b7bf3;font-weight:normal;"><span style="font-size:8.32px">绑定规则</span></div>
<svg class="a" style="left:1227.80px;top:254.00px;" width="16" height="8" viewBox="0 0 16 8"><path d="M3.6 7.6 V0.8 M0.7 3.6 L3.6 0.7 L6.5 3.6" fill="none" stroke="#222" stroke-width="1"/><path d="M12.2 0.4 V7.2 M9.3 4.4 L12.2 7.3 L15.1 4.4" fill="none" stroke="#222" stroke-width="1"/></svg>
<div class="a" style="left:528.30px;top:286.00px;width:10.70px;height:11.40px;border:1px solid #dedfe2;border-radius:2px;background:#fff"></div>
<div class="a" style="left:560.90px;top:287.54px;font-size:8.32px;color:#333;font-weight:normal;"><span style="font-size:10px;letter-spacing:-0.55px">5</span></div>
<div class="a" style="left:589.70px;top:287.54px;font-size:8.32px;color:#333;font-weight:normal;"><span style="font-size:10px;letter-spacing:-0.55px">createtime</span></div>
<div class="a" style="left:664.90px;top:287.54px;font-size:8.32px;color:#333;font-weight:normal;"><span style="font-size:10px;letter-spacing:-0.55px">createtime</span></div>
<div class="a" style="left:752.10px;top:287.54px;font-size:8.32px;color:#333;font-weight:normal;"><span style="font-size:10px;letter-spacing:-0.55px">timestamp</span></div>
<div class="a" style="left:810.20px;top:287.54px;font-size:8.32px;color:#333;font-weight:normal;"><span style="font-size:10px;letter-spacing:-0.55px">19</span></div>
<div class="a" style="left:856.20px;top:287.54px;font-size:8.32px;color:#333;font-weight:normal;"><span style="font-size:10px;letter-spacing:-0.55px">0</span></div>
<div class="a" style="left:902.90px;top:287.54px;font-size:8.32px;color:#555;font-weight:normal;"><span style="font-size:10px;letter-spacing:-0.55px">-</span></div>
<div class="a" style="left:989.60px;top:286.00px;width:11.20px;height:11.60px;border:1px solid #dedfe2;border-radius:2px;background:#fff"></div>
<svg class="a" style="left:1047.80px;top:288.50px;" width="7" height="7" viewBox="0 0 7 7"><path d="M3.5 0.3 V6.7 M0.3 3.5 H6.7" stroke="#3b7bf3" stroke-width="0.9"/></svg>
<div class="a" style="left:1061.40px;top:288.34px;font-size:8.32px;color:#3b7bf3;font-weight:normal;"><span style="font-size:8.32px">绑定规则</span></div>
<svg class="a" style="left:1227.80px;top:288.00px;" width="16" height="8" viewBox="0 0 16 8"><path d="M3.6 7.6 V0.8 M0.7 3.6 L3.6 0.7 L6.5 3.6" fill="none" stroke="#222" stroke-width="1"/><path d="M12.2 0.4 V7.2 M9.3 4.4 L12.2 7.3 L15.1 4.4" fill="none" stroke="#222" stroke-width="1"/></svg>
<div class="a" style="left:512.80px;top:311.74px;font-size:8.32px;color:#333;font-weight:normal;"><span style="font-size:8.32px">输出字段绑定的规则将对数据进行格式化，输出字段将作为建表时使用</span></div>
<div class="a" style="left:757.50px;top:493.00px;width:47.30px;height:22.60px;background:#3b7bf3;border-radius:3px"></div>
<div class="a" style="left:768.90px;top:500.54px;font-size:8.32px;color:#fff;font-weight:normal;"><span style="font-size:8.32px">上一步</span></div>
<div class="a" style="left:808.80px;top:493.00px;width:40.10px;height:22.60px;background:#3b7bf3;border-radius:3px"></div>
<div class="a" style="left:819.60px;top:500.54px;font-size:8.32px;color:#fff;font-weight:normal;"><span style="font-size:8.32px">保 存</span></div>
<div class="a" style="left:852.50px;top:493.00px;width:39.90px;height:22.60px;background:#fff;border:1px solid #dedfe2;border-radius:3px"></div>
<div class="a" style="left:863.80px;top:500.54px;font-size:8.32px;color:#333;font-weight:normal;"><span style="font-size:8.32px">关 闭</span></div>
<svg class="a" style="left:0;top:0" width="1265" height="659"><path d="M964.6 503 L997.4 174" stroke="#e8121d" stroke-width="2.6" stroke-linecap="round"/><path d="M998.5 162.6 L1002.9 174.6 L997.4 172.4 L992.3 173.7 Z" fill="#e8121d"/></svg>
</body></html>
